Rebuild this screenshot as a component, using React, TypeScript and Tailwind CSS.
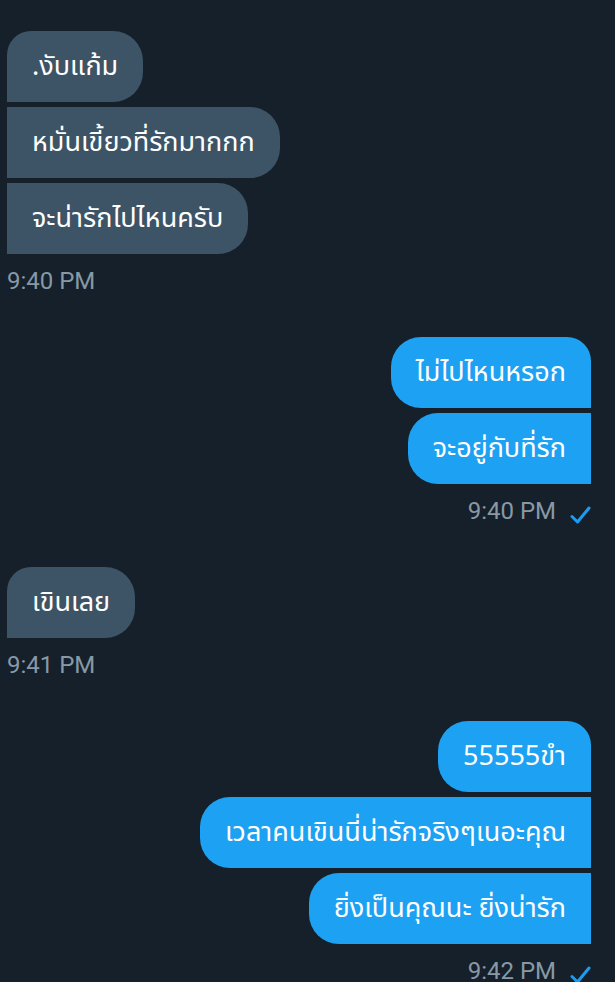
type Msg = { text: string }

type Group = {
  side: "in" | "out"
  time: string
  messages: Msg[]
}

const groups: Group[] = [
  {
    side: "in",
    time: "9:40 PM",
    messages: [
      { text: ".งับแก้ม" },
      { text: "หมั่นเขี้ยวที่รักมากกก" },
      { text: "จะน่ารักไปไหนครับ" },
    ],
  },
  {
    side: "out",
    time: "9:40 PM",
    messages: [{ text: "ไม่ไปไหนหรอก" }, { text: "จะอยู่กับที่รัก" }],
  },
  {
    side: "in",
    time: "9:41 PM",
    messages: [{ text: "เขินเลย" }],
  },
  {
    side: "out",
    time: "9:42 PM",
    messages: [
      { text: "55555ขำ" },
      { text: "เวลาคนเขินนี่น่ารักจริงๆเนอะคุณ" },
      { text: "ยิ่งเป็นคุณนะ ยิ่งน่ารัก" },
    ],
  },
]

function Check() {
  return (
    <svg width="22" height="18" viewBox="0 0 22 18" className="ml-[13px] mt-[8px]">
      <path
        d="M3 10.5 L8.5 16 L20 2"
        fill="none"
        stroke="#1d9bf0"
        strokeWidth="3"
        strokeLinecap="round"
        strokeLinejoin="round"
      />
    </svg>
  )
}

function Bubble({ text, side, first }: { text: string; side: "in" | "out"; first: boolean }) {
  const base =
    "h-[71px] flex items-center px-[25px] text-[27px] leading-none text-white whitespace-nowrap"
  if (side === "in") {
    return (
      <div className={`${base} bg-[#3d5466] rounded-r-[30px] ${first ? "rounded-tl-[24px]" : ""}`}>
        {text}
      </div>
    )
  }
  return (
    <div className={`${base} bg-[#1da1f2] rounded-l-[30px] ${first ? "rounded-tr-[24px]" : ""}`}>
      {text}
    </div>
  )
}

export default function App() {
  return (
    <div
      className="min-h-screen bg-[#15202b] pl-[7px] pr-[24px] pt-[31px] overflow-hidden"
      style={{ fontFamily: '"Noto Sans Thai", "Noto Sans Thai UI", Roboto, "Noto Sans", sans-serif' }}
    >
      {groups.map((g, gi) => (
        <section
          key={gi}
          className={`flex flex-col gap-[5px] ${g.side === "in" ? "items-start" : "items-end"} ${
            gi < groups.length - 1 ? "mb-[42px]" : ""
          }`}
        >
          {g.messages.map((m, mi) => (
            <Bubble key={mi} text={m.text} side={g.side} first={mi === 0} />
          ))}
          <div className="mt-[8px] flex items-center h-[28px] text-[24px] leading-[28px] text-[#8899a6] font-['Roboto']">
            <span>{g.time}</span>
            {g.side === "out" && <Check />}
          </div>
        </section>
      ))}
    </div>
  )
}
